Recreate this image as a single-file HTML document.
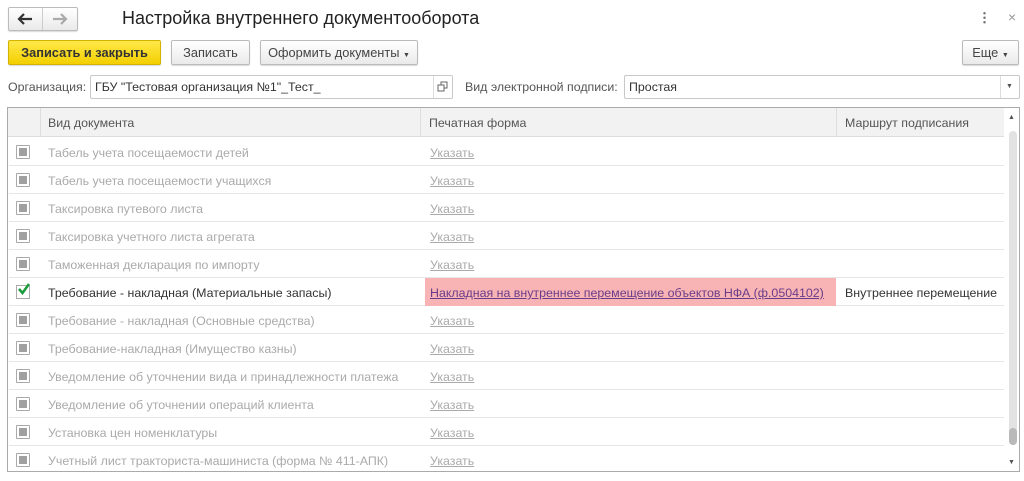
<!DOCTYPE html>
<html><head><meta charset="utf-8"><style>
*{box-sizing:border-box;margin:0;padding:0}
body{width:1024px;height:481px;background:#fff;font-family:"Liberation Sans",Arial,sans-serif;font-size:12.4px;color:#333;position:relative;overflow:hidden;white-space:nowrap}
.a{position:absolute}
.btn{position:absolute;border:1px solid #bbb;border-radius:2px;background:linear-gradient(#fff,#eaeaea);box-shadow:0 1px 1px rgba(0,0,0,.15);text-align:center;line-height:23px;color:#444;font-size:12.8px}
.inp{position:absolute;border:1px solid #c8c8c8;border-radius:2px;background:#fff;height:24px;line-height:22px;padding-left:4px;color:#333}
.row{position:absolute;left:9px;width:995px;height:28px;border-bottom:1px solid #e6e6e6}
.row .cb{position:absolute;left:7px;top:7px;width:14px;height:14px;border:1px solid #aaa;background:#fff;border-radius:1px}
.row .cb:after{content:"";position:absolute;left:2px;top:2px;width:8px;height:8px;background:#a0a0a0}
.row .t{position:absolute;left:39px;top:8px;color:#aaa}
.row .l{position:absolute;left:421px;top:8px;color:#aaa;text-decoration:underline}
</style></head><body>
<div class="btn" style="left:8px;top:7px;width:70px;height:24px;"></div>
<div class="a" style="left:42px;top:8px;width:1px;height:22px;background:#ccc"></div>
<svg class="a" style="left:17px;top:12px" width="16" height="14" viewBox="0 0 16 14"><path d="M2 7H15M7 2L2 7L7 12" stroke="#333" stroke-width="2.2" fill="none"/></svg>
<svg class="a" style="left:52px;top:12px" width="16" height="14" viewBox="0 0 16 14"><path d="M1 7H14M9 2L14 7L9 12" stroke="#aaa" stroke-width="2.2" fill="none"/></svg>
<div class="a" style="left:122px;top:8px;font-size:18px;color:#222">Настройка внутреннего документооборота</div>
<div class="a" style="left:983px;top:11px;width:3px;height:14px;background:radial-gradient(circle,#777 1px,transparent 1.5px) 0 0/3px 4.5px"></div>
<div class="a" style="left:1008px;top:9px;color:#999;font-size:14px">×</div>
<div class="btn" style="left:8px;top:40px;width:153px;height:25px;background:linear-gradient(#ffe94a,#f3cf00);border-color:#d4b300;color:#333;font-weight:bold">Записать и закрыть</div>
<div class="btn" style="left:171px;top:40px;width:79px;height:25px">Записать</div>
<div class="btn" style="left:260px;top:40px;width:158px;height:25px">Оформить документы <span style="font-size:7px">▼</span></div>
<div class="btn" style="left:962px;top:40px;width:57px;height:25px">Еще <span style="font-size:7px">▼</span></div>
<div class="a" style="left:8px;top:80px;color:#555">Организация:</div>
<div class="inp" style="left:90px;top:75px;width:363px">ГБУ "Тестовая организация №1"_Тест_</div>
<div class="a" style="left:433px;top:76px;width:1px;height:22px;background:#ddd"></div>
<svg class="a" style="left:437px;top:81px" width="11" height="11" viewBox="0 0 11 11"><rect x="4" y="1" width="6" height="6" fill="none" stroke="#666"/><rect x="1" y="4" width="6" height="6" fill="#fff" stroke="#666"/></svg>
<div class="a" style="left:465px;top:80px;color:#555">Вид электронной подписи:</div>
<div class="inp" style="left:624px;top:75px;width:396px">Простая</div>
<div class="a" style="left:1000px;top:76px;width:1px;height:22px;background:#ddd"></div>
<div class="a" style="left:1006px;top:83px;font-size:7px;color:#555">▼</div>
<div class="a" style="left:7px;top:107px;width:1013px;height:365px;border:1px solid #aaa"></div>
<div class="a" style="left:8px;top:108px;width:996px;height:29px;background:#f2f2f2;border-bottom:1px solid #ddd"></div>
<div class="a" style="left:40px;top:108px;width:1px;height:29px;background:#ddd"></div>
<div class="a" style="left:420px;top:108px;width:1px;height:29px;background:#ddd"></div>
<div class="a" style="left:836px;top:108px;width:1px;height:29px;background:#ddd"></div>
<div class="a" style="left:48px;top:116px;color:#555">Вид документа</div>
<div class="a" style="left:429px;top:116px;color:#555">Печатная форма</div>
<div class="a" style="left:845px;top:116px;color:#555">Маршрут подписания</div>
<div class="a" style="left:1004px;top:108px;width:15px;height:363px;background:#fff"></div>
<div class="a" style="left:1008px;top:114px;font-size:7px;color:#555">▲</div>
<div class="a" style="left:1009px;top:131px;width:8px;height:314px;background:#e2e2e2;border-radius:4px"></div>
<div class="a" style="left:1009px;top:428px;width:8px;height:17px;background:#b9b9b9;border-radius:4px"></div>
<div class="a" style="left:1008px;top:459px;font-size:7px;color:#555">▼</div>

<div class="row" style="top:138px"><div class="cb"></div><div class="t">Табель учета посещаемости детей</div><div class="l">Указать</div></div>
<div class="row" style="top:166px"><div class="cb"></div><div class="t">Табель учета посещаемости учащихся</div><div class="l">Указать</div></div>
<div class="row" style="top:194px"><div class="cb"></div><div class="t">Таксировка путевого листа</div><div class="l">Указать</div></div>
<div class="row" style="top:222px"><div class="cb"></div><div class="t">Таксировка учетного листа агрегата</div><div class="l">Указать</div></div>
<div class="row" style="top:250px"><div class="cb"></div><div class="t">Таможенная декларация по импорту</div><div class="l">Указать</div></div>
<div class="row" style="top:278px"><div class="a" style="left:416px;top:0;width:411px;height:28px;background:#f8b4b4"></div><div class="a" style="left:7px;top:7px;width:14px;height:14px;border:1px solid #aaa;background:#fff"></div><svg class="a" style="left:8px;top:4px" width="14" height="14" viewBox="0 0 14 14"><path d="M2 7L5.5 11L12 2" stroke="#1a9a3a" stroke-width="2.5" fill="none"/></svg><div class="t" style="color:#333">Требование - накладная (Материальные запасы)</div><div class="l" style="color:#6a3d8a">Накладная на внутреннее перемещение объектов НФА (ф.0504102)</div><div class="a" style="left:836px;top:8px;color:#333">Внутреннее перемещение</div></div>
<div class="row" style="top:306px"><div class="cb"></div><div class="t">Требование - накладная (Основные средства)</div><div class="l">Указать</div></div>
<div class="row" style="top:334px"><div class="cb"></div><div class="t">Требование-накладная (Имущество казны)</div><div class="l">Указать</div></div>
<div class="row" style="top:362px"><div class="cb"></div><div class="t">Уведомление об уточнении вида и принадлежности платежа</div><div class="l">Указать</div></div>
<div class="row" style="top:390px"><div class="cb"></div><div class="t">Уведомление об уточнении операций клиента</div><div class="l">Указать</div></div>
<div class="row" style="top:418px"><div class="cb"></div><div class="t">Установка цен номенклатуры</div><div class="l">Указать</div></div>
<div class="row" style="top:446px;border:none"><div class="cb"></div><div class="t">Учетный лист тракториста-машиниста (форма № 411-АПК)</div><div class="l">Указать</div></div>
</body></html>
